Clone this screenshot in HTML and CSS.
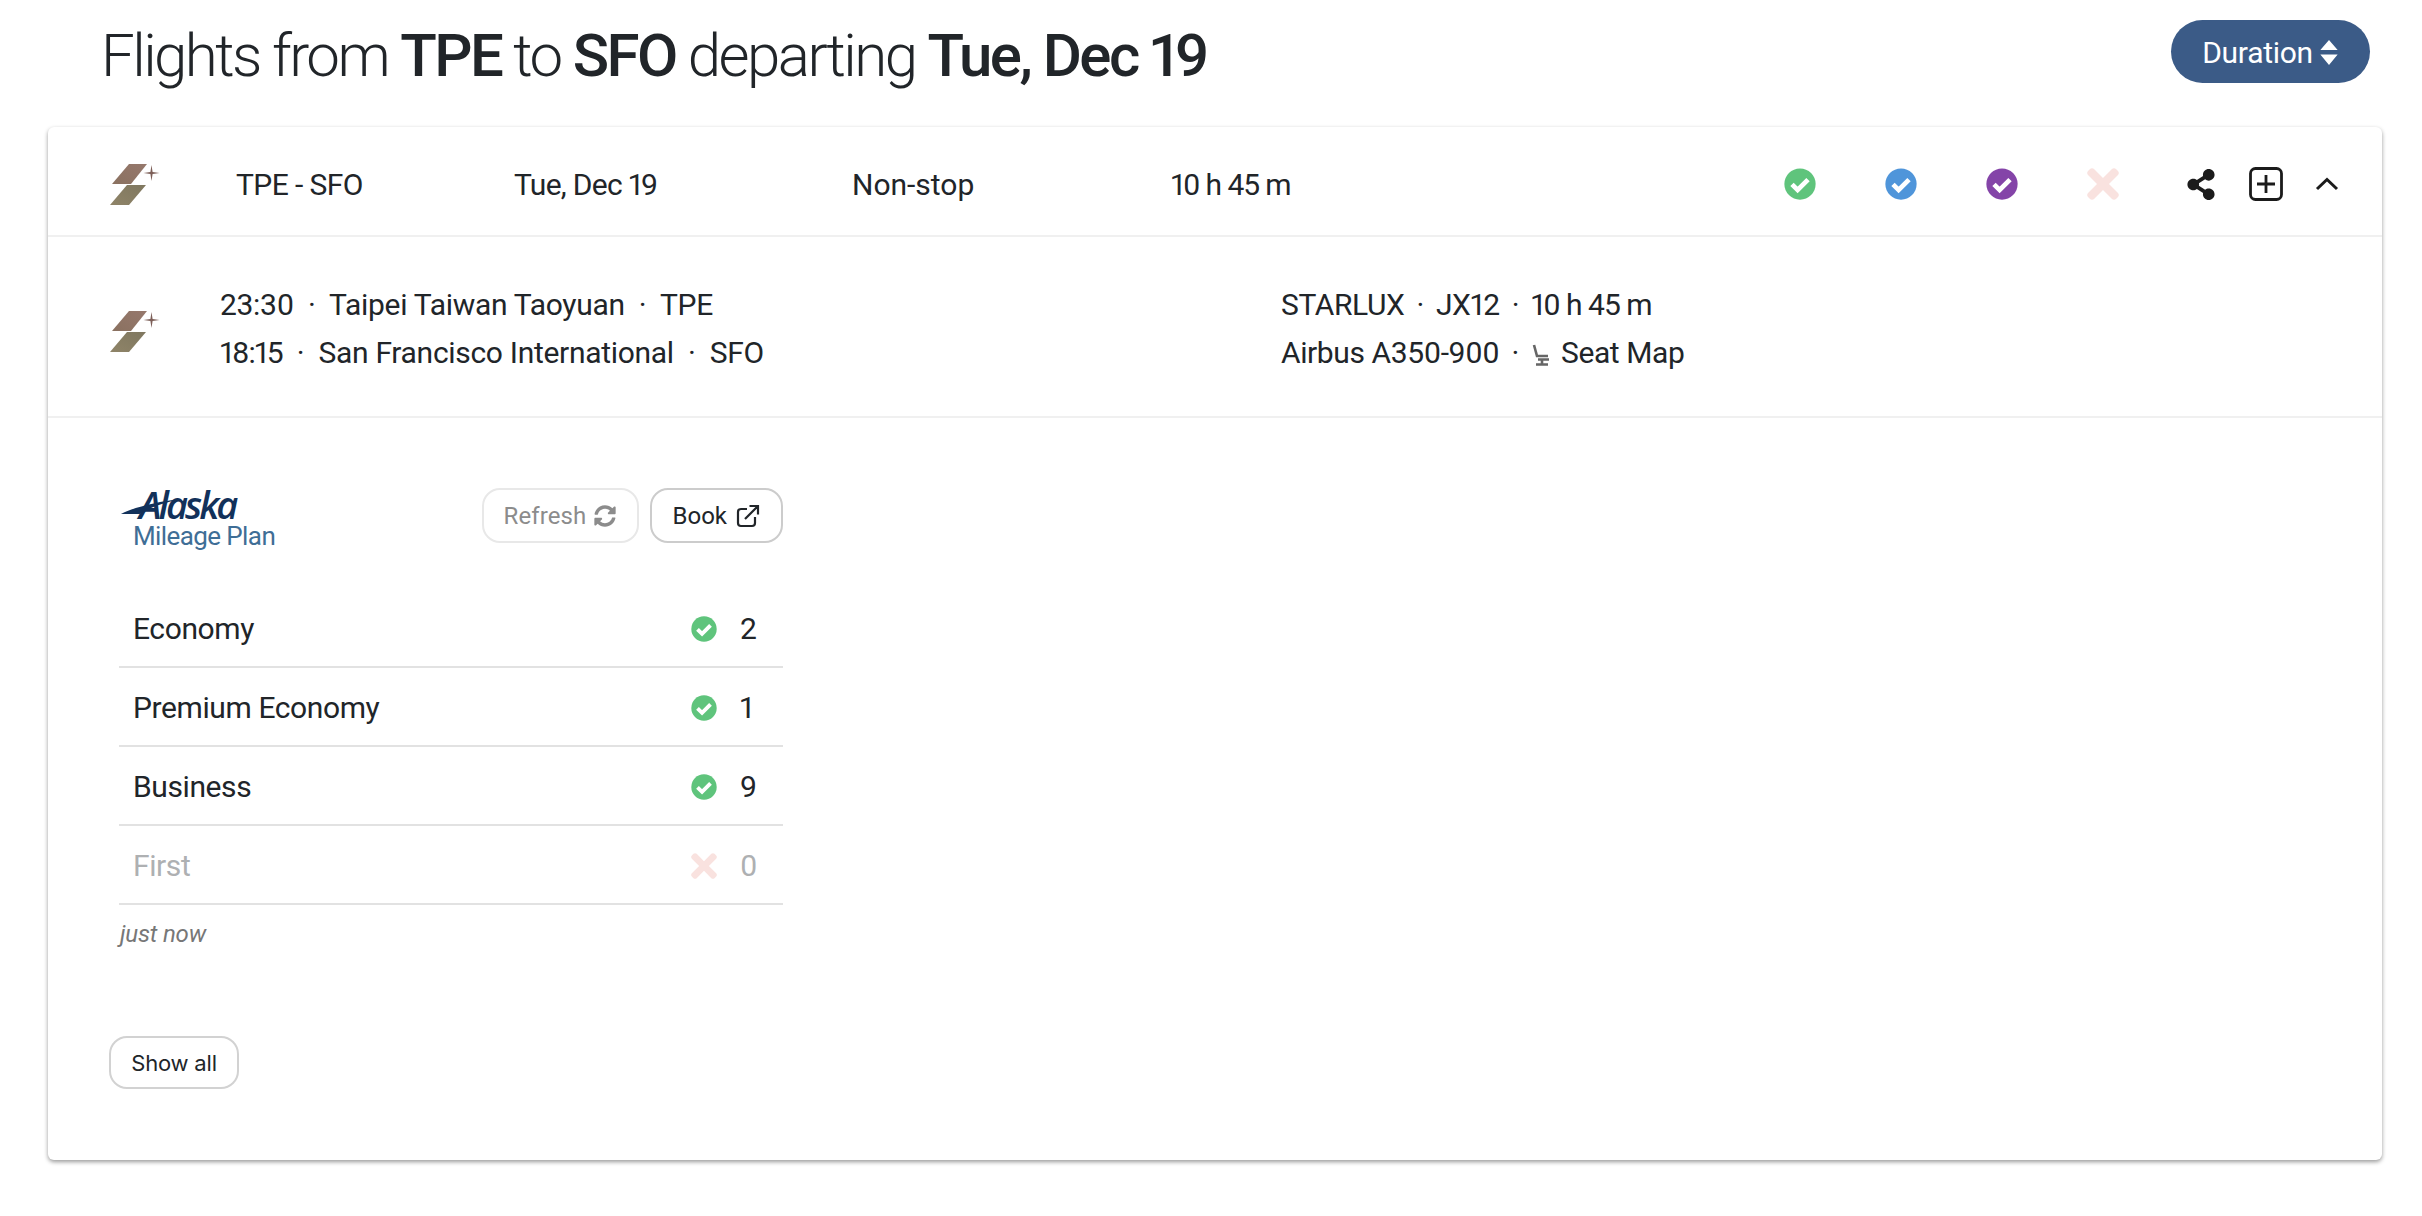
FILE: index.html
```html
<!DOCTYPE html>
<html lang="en">
    <head>
        <meta charset="UTF-8">
        <title>Flights from TPE to SFO</title>
        <link rel="stylesheet" href="styles.css">
    </head>
    <body>
        <svg class="defs" width="0" height="0">
            <defs>
                <linearGradient id="sxTop" x1="0" y1="1" x2="1" y2="0">
                    <stop offset="0" stop-color="#8a7160"/>
                    <stop offset="1" stop-color="#96786c"/>
                </linearGradient>
                <linearGradient id="sxBottom" x1="0" y1="1" x2="1" y2="0">
                    <stop offset="0" stop-color="#8f8468"/>
                    <stop offset="1" stop-color="#7f775f"/>
                </linearGradient>
                <symbol id="starlux" viewBox="0 0 50 42">
                    <path fill="url(#sxTop)" d="M2 21 L19 1 L37 1 L21 21 Z"/>
                    <path fill="url(#sxBottom)" d="M0 42 L17 22 L36 22 L19 42 Z"/>
                    <path fill="#7d5f58" d="M41.5 2 L42.6 9 L49.5 10 L42.6 11 L41.5 18 L40.4 11 L33.5 10 L40.4 9 Z"/>
                </symbol>
                <symbol id="check" viewBox="0 0 512 512">
                    <circle cx="256" cy="256" r="250"/>
                    <path fill="none" stroke="#fff" stroke-width="76" d="M128 262 L218 352 L384 186"/>
                </symbol>
                <symbol id="times" viewBox="0 78 352 356">
                    <path d="M242.72 256l100.07-100.07c12.28-12.28 12.28-32.19 0-44.48l-22.24-22.24c-12.28-12.28-32.19-12.28-44.48 0L176 189.28 75.93 89.21c-12.28-12.28-32.19-12.28-44.48 0L9.21 111.45c-12.28 12.28-12.28 32.19 0 44.48L109.28 256 9.21 356.07c-12.28 12.28-12.28 32.19 0 44.48l22.24 22.24c12.28 12.28 32.2 12.28 44.48 0L176 322.72l100.07 100.07c12.28 12.28 32.2 12.28 44.48 0l22.24-22.24c12.28-12.28 12.28-32.19 0-44.48L242.72 256z"/>
                </symbol>
            </defs>
        </svg>

        <header class="top">
            <h1 class="title">Flights from <b>TPE</b> to <b>SFO</b> departing <b>Tue, Dec 19</b></h1>
            <button class="sort-btn">Duration
                <svg class="sort-icon" viewBox="0 0 20 26"><path d="M10 0 L19 10.5 H1 Z M1 15 H19 L10 26 Z"/></svg>
            </button>
        </header>

        <main class="card">
            <div class="summary">
                <svg class="sx-logo"><use href="#starlux"/></svg>
                <span class="cell route">TPE - SFO</span>
                <span class="cell date">Tue, Dec 19</span>
                <span class="cell stops">Non-stop</span>
                <span class="cell length">10 h 45 m</span>
                <div class="cabins">
                    <svg class="cabin green"><use href="#check"/></svg>
                    <svg class="cabin blue"><use href="#check"/></svg>
                    <svg class="cabin purple"><use href="#check"/></svg>
                    <svg class="cabin none"><use href="#times"/></svg>
                </div>
                <div class="actions">
                    <svg class="share" viewBox="0 0 448 512"><path d="M352 320c-22.608 0-43.387 7.819-59.79 20.895l-102.486-64.054a96.551 96.551 0 0 0 0-41.683l102.486-64.054C308.613 184.181 329.392 192 352 192c53.019 0 96-42.981 96-96S405.019 0 352 0s-96 42.981-96 96c0 7.158.79 14.13 2.276 20.841L155.79 180.895C139.387 167.819 118.608 160 96 160c-53.019 0-96 42.981-96 96s42.981 96 96 96c22.608 0 43.387-7.819 59.79-20.895l102.486 64.054A96.301 96.301 0 0 0 256 416c0 53.019 42.981 96 96 96s96-42.981 96-96-42.981-96-96-96z"/></svg>
                    <svg class="plus" viewBox="0 0 34 34"><rect x="1.5" y="1.5" width="31" height="31" rx="5"/><path d="M17 8 V26 M8 17 H26"/></svg>
                    <svg class="chevron" viewBox="0 0 24 14"><path d="M2 12 L12 2.5 L22 12"/></svg>
                </div>
            </div>

            <div class="segment">
                <svg class="sx-logo"><use href="#starlux"/></svg>
                <div class="seg-left">
                    <p>23:30 <i class="dot">·</i> Taipei Taiwan Taoyuan <i class="dot">·</i> TPE</p>
                    <p><span class="dur">18:15</span> <i class="dot">·</i> San Francisco International <i class="dot">·</i> SFO</p>
                </div>
                <div class="seg-right">
                    <p>STARLUX <i class="dot">·</i> JX12 <i class="dot">·</i> <span class="dur">10 h 45 m</span></p>
                    <p>Airbus A350-900 <i class="dot">·</i>
                        <svg class="seat" viewBox="0 0 20 22"><path d="M3 1 L6 12 H17 M7 15.5 H18 M11 15.5 V20 M5 20.5 H17"/></svg>
                        Seat Map</p>
                </div>
            </div>

            <section class="program">
                <div class="program-head">
                    <div class="alaska">
                        <svg class="swoosh" viewBox="0 0 62 16"><path d="M0 16 C16 8 40 3 62 0 C44 5 30 9 20 16 Z"/></svg>
                        <span class="alaska-name">Alaska</span>
                        <span class="alaska-plan">Mileage Plan</span>
                    </div>
                    <div class="program-btns">
                        <button class="btn btn-off">Refresh
                            <svg class="btn-icon" viewBox="0 0 512 512"><path d="M370.72 133.28C339.458 104.008 298.888 87.962 255.848 88c-77.458.068-144.328 53.178-162.791 126.85-1.344 5.363-6.122 9.15-11.651 9.15H24.103c-7.498 0-13.194-6.807-11.807-14.176C33.933 94.924 134.813 8 256 8c66.448 0 126.791 26.136 171.315 68.685L463.03 40.97C478.149 25.851 504 36.559 504 57.941V192c0 13.255-10.745 24-24 24H345.941c-21.382 0-32.09-25.851-16.971-40.971l41.75-41.749zM32 296h134.059c21.382 0 32.09 25.851 16.971 40.971l-41.75 41.75c31.262 29.273 71.835 45.319 114.876 45.28 77.418-.07 144.315-53.144 162.787-126.849 1.344-5.363 6.122-9.15 11.651-9.15h57.304c7.498 0 13.194 6.807 11.807 14.176C478.067 417.076 377.187 504 256 504c-66.448 0-126.791-26.136-171.315-68.685L48.97 471.03C33.851 486.149 8 475.441 8 454.059V320c0-13.255 10.745-24 24-24z"/></svg>
                        </button>
                        <button class="btn">Book
                            <svg class="btn-icon link" viewBox="0 0 24 24"><path d="M19 13 V19 A3 3 0 0 1 16 22 H5 A3 3 0 0 1 2 19 V8 A3 3 0 0 1 5 5 H11"/><path d="M9 15 L21 3 M13.5 2 H22 V10.5"/></svg>
                        </button>
                    </div>
                </div>

                <div class="fare">
                    <span class="fare-name">Economy</span>
                    <svg class="fare-icon green"><use href="#check"/></svg>
                    <span class="fare-count">2</span>
                </div>
                <div class="fare">
                    <span class="fare-name">Premium Economy</span>
                    <svg class="fare-icon green"><use href="#check"/></svg>
                    <span class="fare-count">1</span>
                </div>
                <div class="fare">
                    <span class="fare-name">Business</span>
                    <svg class="fare-icon green"><use href="#check"/></svg>
                    <span class="fare-count">9</span>
                </div>
                <div class="fare fare-off">
                    <span class="fare-name">First</span>
                    <svg class="fare-icon none"><use href="#times"/></svg>
                    <span class="fare-count">0</span>
                </div>
                <p class="updated">just now</p>
            </section>

            <button class="show-all">Show all</button>
        </main>
    </body>
</html>
```

FILE: styles.css
```css
* {
    box-sizing: border-box;
}

body {
    margin: 0;
    min-height: 1216px;
    background: #fff;
    color: #212529;
    font-family: "Roboto", "Liberation Sans", sans-serif;
    font-size: 30px;
    letter-spacing: -0.4px;
    font-variant-numeric: proportional-nums;
}

p {
    margin: 0;
}

button {
    font-family: inherit;
    cursor: pointer;
}

.defs {
    position: absolute;
}

.top {
    height: 127px;
    padding: 20px 52px 0 101px;
    display: flex;
    justify-content: space-between;
    align-items: flex-start;
}

.title {
    margin: 0;
    font-size: 60px;
    font-weight: 300;
    line-height: 72px;
    letter-spacing: -2.55px;
}

.title b {
    font-weight: 500;
}

.sort-btn {
    width: 199px;
    height: 63px;
    padding-top: 2px;
    border: 0;
    border-radius: 32px;
    background: #3b5b87;
    color: #fff;
    font-size: 30px;
    letter-spacing: -0.3px;
    display: flex;
    align-items: center;
    justify-content: center;
    gap: 6px;
}

.sort-icon {
    width: 20px;
    height: 25px;
    fill: #fff;
}

.card {
    margin: 0 40px 0 48px;
    height: 1033px;
    border-radius: 6px;
    background: #fff;
    box-shadow: 0 2px 4px rgba(0, 0, 0, 0.4);
}

.sx-logo {
    width: 50px;
    height: 42px;
    flex: none;
}

.summary {
    height: 110px;
    padding: 6px 0 0 62px;
    border-bottom: 2px solid #f0f0f0;
    display: flex;
    align-items: center;
}

.cell {
    display: block;
}

.route {
    margin-left: 76px;
    width: 278px;
    letter-spacing: -0.6px;
}

.date {
    width: 338px;
    letter-spacing: -0.7px;
}

.stops {
    width: 319px;
    letter-spacing: 0;
}

.length {
    width: 200px;
    letter-spacing: -1.1px;
}

.cabins {
    margin-left: 413px;
    display: flex;
    gap: 69px;
}

.cabin {
    width: 32px;
    height: 32px;
}

.green { fill: #5fc47c; }
.blue { fill: #4f95da; }
.purple { fill: #8444a8; }
.none { fill: #f9e2df; }

.actions {
    margin-left: 67px;
    display: flex;
    align-items: center;
}

.share {
    width: 30px;
    height: 31px;
    fill: #1b1b1b;
}

.plus {
    margin-left: 33px;
    width: 34px;
    height: 34px;
    fill: none;
    stroke: #1b1b1b;
    stroke-width: 2.8;
}

.chevron {
    margin-left: 32px;
    width: 24px;
    height: 14px;
    fill: none;
    stroke: #1b1b1b;
    stroke-width: 3;
}

.segment {
    height: 181px;
    padding: 4px 0 0 62px;
    border-bottom: 2px solid #f0f0f0;
    display: flex;
    align-items: center;
    line-height: 48px;
}

.segment .sx-logo {
    margin-top: 5px;
}

.seg-left {
    margin-left: 60px;
    width: 1061px;
    letter-spacing: -0.3px;
}

.seg-left .dot {
    margin: 0 7px;
}

.dur {
    letter-spacing: -1px;
}

.dot {
    font-style: normal;
    margin: 0 5px;
}

.seat {
    width: 20px;
    height: 22px;
    margin-right: 3px;
    vertical-align: -3px;
    fill: none;
    stroke: #666;
    stroke-width: 2.6;
}

.program {
    width: 735px;
    padding: 70px 0 0 71px;
}

.program-head {
    height: 101px;
    display: flex;
    justify-content: space-between;
    align-items: flex-start;
}

.alaska {
    position: relative;
    width: 170px;
    height: 64px;
}

.swoosh {
    position: absolute;
    left: 0;
    top: 11px;
    width: 62px;
    height: 15px;
    fill: #12315a;
}

.alaska-name {
    position: absolute;
    left: 20px;
    top: 0;
    color: #12315a;
    font-family: "Open Sans", sans-serif;
    font-size: 38px;
    line-height: 32px;
    font-style: italic;
    font-weight: 600;
    letter-spacing: -3px;
}

.alaska-plan {
    position: absolute;
    left: 14px;
    top: 33px;
    color: #3f6e96;
    font-size: 26px;
    line-height: 30px;
    letter-spacing: -0.6px;
    white-space: nowrap;
}

.program-btns {
    display: flex;
    gap: 11px;
}

.btn {
    height: 55px;
    padding: 0 21px;
    border: 2px solid #ccc;
    border-radius: 18px;
    background: #fff;
    color: #212529;
    font-size: 24px;
    letter-spacing: 0;
    display: flex;
    align-items: center;
    gap: 9px;
}

.btn-off {
    width: 157px;
    padding: 0 20px;
    border-color: #e8e8e8;
    color: #8c8c8c;
    letter-spacing: 0.1px;
    justify-content: center;
    gap: 8px;
}

.btn-icon {
    width: 22px;
    height: 22px;
    fill: #8c8c8c;
}

.link {
    width: 24px;
    height: 24px;
    fill: none;
    stroke: #212529;
    stroke-width: 2.2;
}

.fare {
    height: 79px;
    padding: 2px 0 0 14px;
    border-bottom: 2px solid #e2e2e2;
    display: flex;
    align-items: center;
}

.fare-name {
    flex: 1;
}

.fare-icon {
    width: 26px;
    height: 26px;
}

.fare-count {
    width: 66px;
    padding-left: 23px;
    text-align: left;
}

.fare-off {
    color: #aeb0b2;
}

.updated {
    margin-top: 15px;
    padding-left: 1px;
    color: #777;
    font-size: 24px;
    font-style: italic;
    letter-spacing: -0.2px;
}

.show-all {
    margin: 88px 0 0 61px;
    width: 130px;
    height: 53px;
    border: 2px solid #d2d2d2;
    border-radius: 18px;
    background: #fff;
    color: #212529;
    font-family: "Inter", sans-serif;
    font-size: 22px;
    letter-spacing: -0.2px;
}
```
